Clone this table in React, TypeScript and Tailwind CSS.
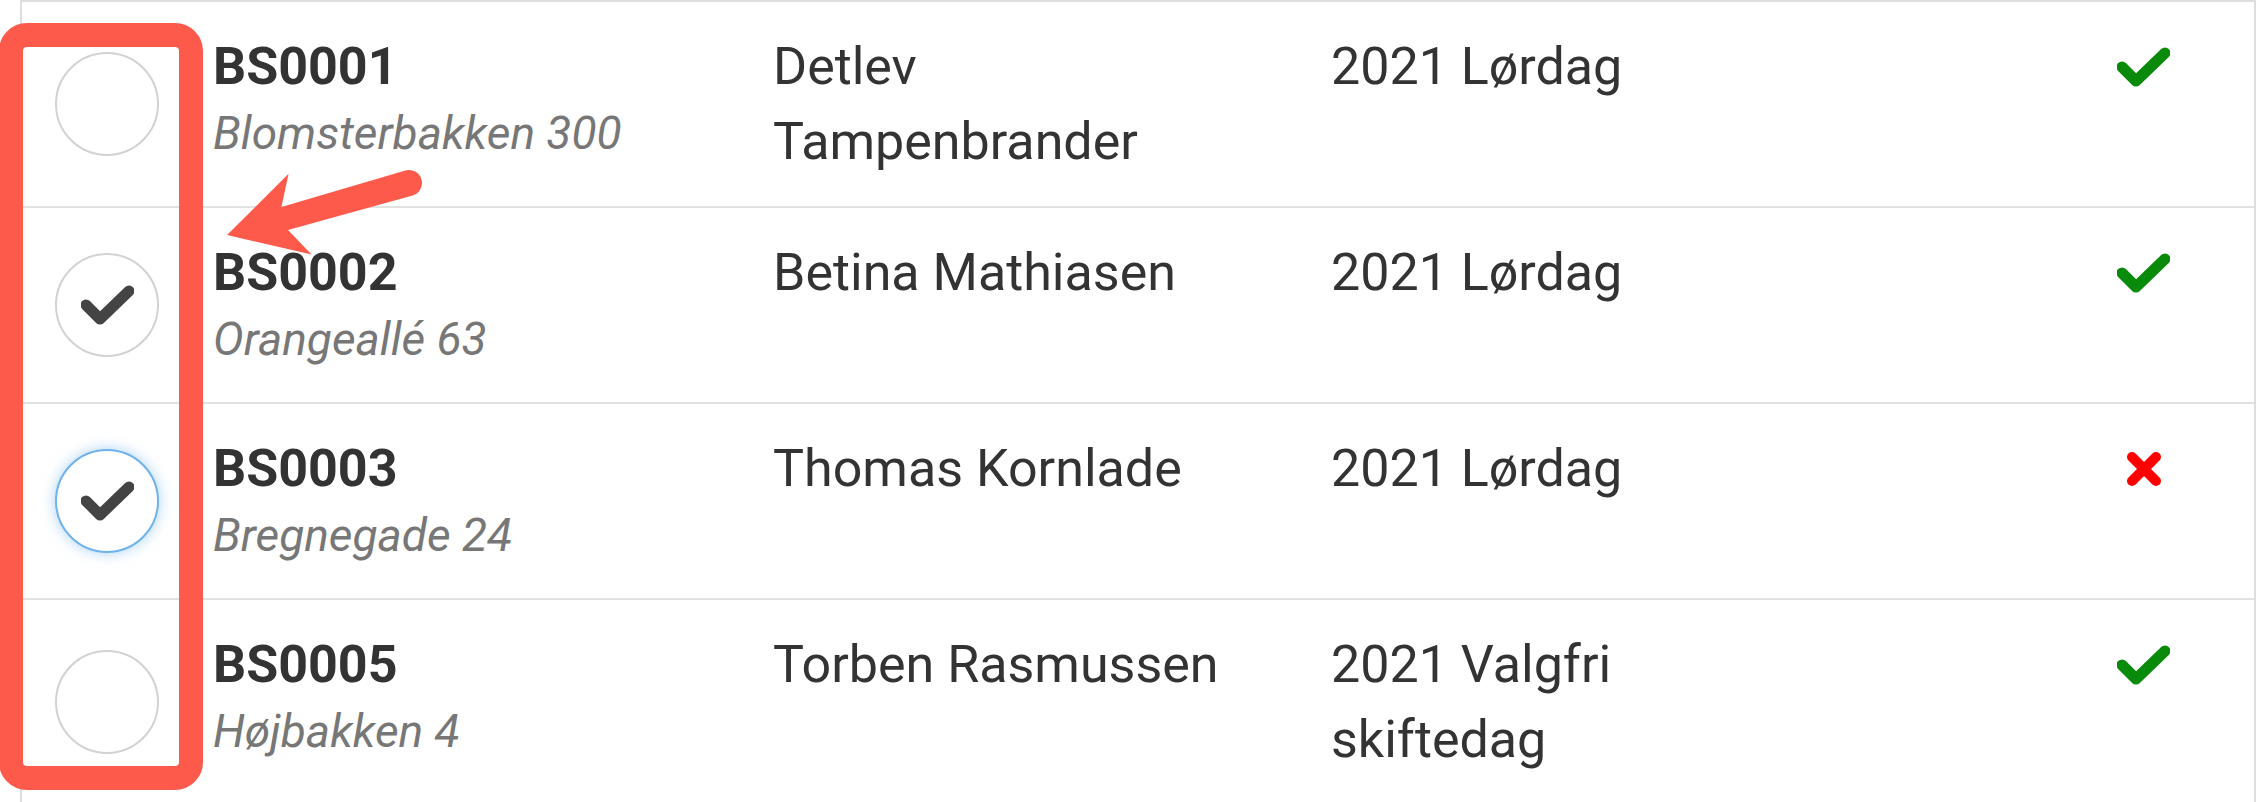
import React from 'react';

type Row = {
    id: string;
    address: string;
    name: string;
    plan: string;
    ok: boolean;
    selected: 'none' | 'checked' | 'focused';
};

const rows: Row[] = [
    { id: 'BS0001', address: 'Blomsterbakken 300', name: 'Detlev Tampenbrander', plan: '2021 Lørdag', ok: true, selected: 'none' },
    { id: 'BS0002', address: 'Orangeallé 63', name: 'Betina Mathiasen', plan: '2021 Lørdag', ok: true, selected: 'checked' },
    { id: 'BS0003', address: 'Bregnegade 24', name: 'Thomas Kornlade', plan: '2021 Lørdag', ok: false, selected: 'focused' },
    { id: 'BS0005', address: 'Højbakken 4', name: 'Torben Rasmussen', plan: '2021 Valgfri skiftedag', ok: true, selected: 'none' },
];

function CheckIcon({ color }: { color: string }) {
    return (
        <svg width="53" height="40" viewBox="0 0 53 40" fill="none">
            <polyline points="5,20 19,34 48,6" stroke={color} strokeWidth="11" strokeLinecap="round" strokeLinejoin="round" />
        </svg>
    );
}

function CrossIcon() {
    return (
        <svg width="36" height="36" viewBox="0 0 36 36" fill="none">
            <path d="M6 6 L30 30 M30 6 L6 30" stroke="#ff0000" strokeWidth="10" strokeLinecap="round" />
        </svg>
    );
}

function RoundCheckbox({ state }: { state: Row['selected'] }) {
    const ring =
        state === 'focused'
            ? 'border-[#6fb2ec] shadow-[0_0_14px_rgba(102,175,233,0.55)]'
            : 'border-[#d2d2d2]';
    return (
        <div className={`w-[104px] h-[104px] rounded-full border-2 bg-white flex items-center justify-center ${ring}`}>
            {state !== 'none' && <CheckIcon color="#444444" />}
        </div>
    );
}

export default function App() {
    return (
        <div className="relative w-[2256px] h-[802px] overflow-hidden bg-white font-[Roboto,sans-serif] text-[#333]">
            <div className="ml-[20px] border-l-2 border-r-2 border-t-2 border-[#dedede]">
                {rows.map((r) => (
                    <div key={r.id} className="grid grid-cols-[170px_554px_558px_520px_1fr] border-b-2 border-[#e2e2e2]">
                        <div className="flex items-center justify-center">
                            <RoundCheckbox state={r.selected} />
                        </div>
                        <div className="pl-[21px] py-[27px]">
                            <div className="text-[52px] leading-[75px] font-bold">{r.id}</div>
                            <div className="text-[46px] leading-[58px] mb-[7px] italic text-[#777]">{r.address}</div>
                        </div>
                        <div className="pl-[27px] pr-[27px] py-[27px] text-[52px] leading-[75px]">{r.name}</div>
                        <div className="pl-[27px] pr-[27px] py-[27px] text-[52px] leading-[75px]">{r.plan}</div>
                        <div className="flex justify-end pr-[84px] py-[27px]">
                            <div className="w-[53px] h-[75px] flex items-center justify-center">
                                {r.ok ? <CheckIcon color="#0a8a0a" /> : <CrossIcon />}
                            </div>
                        </div>
                    </div>
                ))}
            </div>

            {/* annotation: highlight box around the selection column */}
            <div className="absolute left-[-1px] top-[23px] w-[204px] h-[767px] rounded-[28px] border-[24px] border-[#fd5a4c] pointer-events-none" />

            {/* annotation: arrow */}
            <svg className="absolute left-0 top-0 pointer-events-none" width="2256" height="802" viewBox="0 0 2256 802">
                <path
                    d="M227 235 L288.6 173.7 L281.4 207 L405.4 170.5 A13 13 0 0 1 412.6 195.5 L288 230 L311.6 254.5 Z"
                    fill="#fd5a4c"
                />
            </svg>
        </div>
    );
}
